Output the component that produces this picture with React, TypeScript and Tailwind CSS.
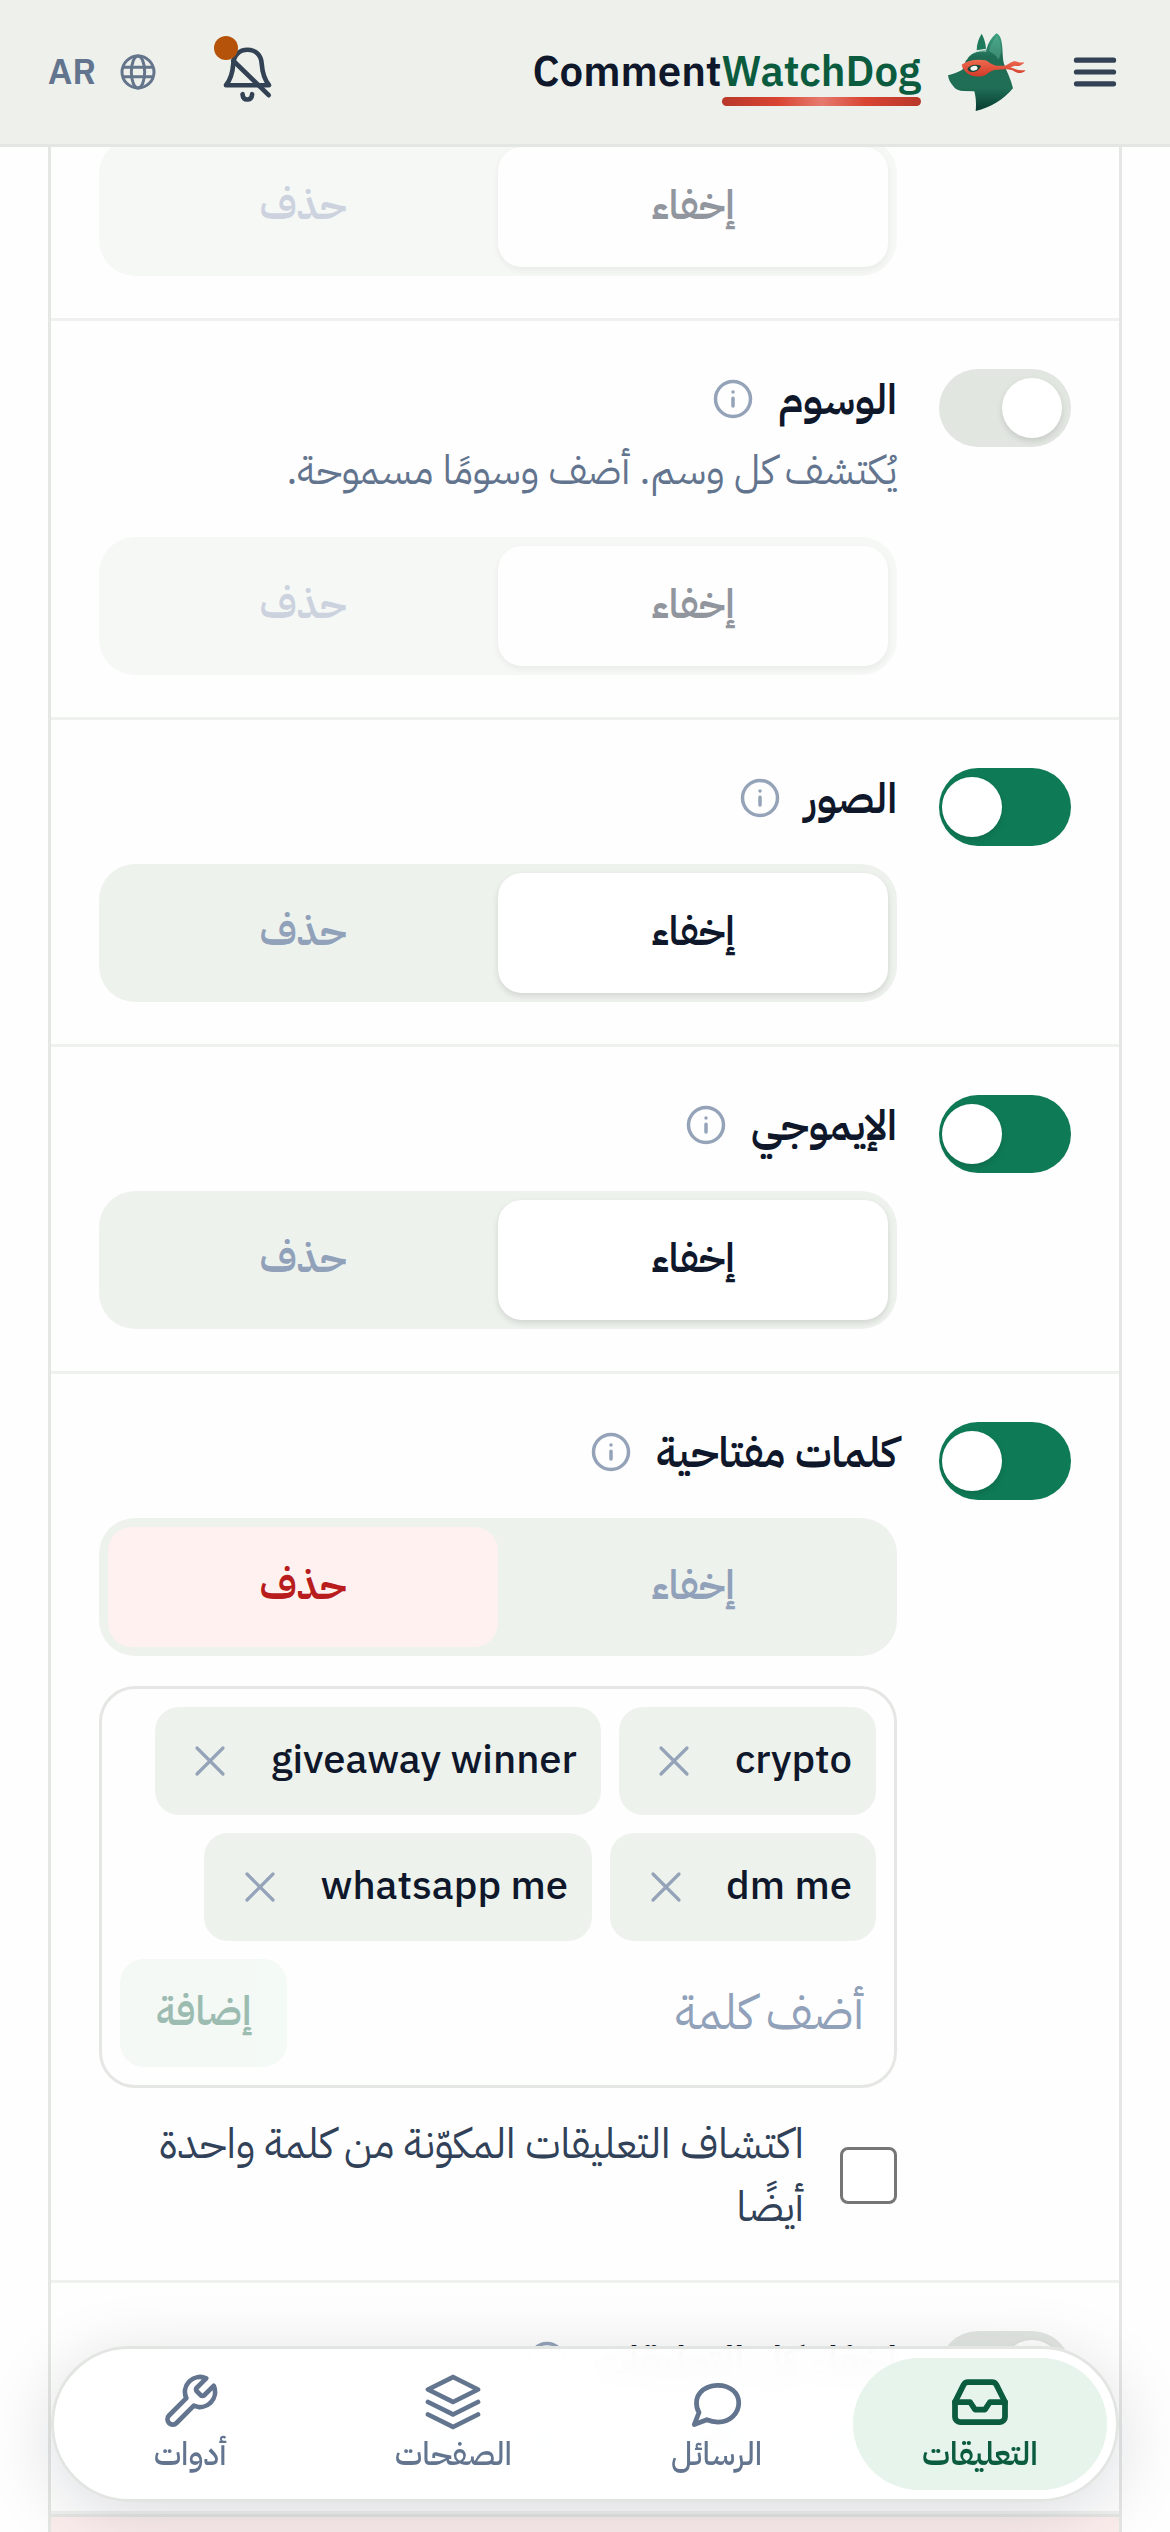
import { useState } from 'react';
import type { ReactNode } from 'react';
import clsx from 'clsx';

type Action = 'hide' | 'delete';

function DogLogo() {
  return (
    <svg viewBox="135 68 234 234" className="size-[78px]" aria-hidden="true">
      <defs>
        <linearGradient id="dogHead" x1="0" y1="0" x2="0" y2="1">
          <stop offset="0" stopColor="#3fa483" />
          <stop offset="0.3" stopColor="#1f6b54" />
          <stop offset="0.7" stopColor="#1f6f56" />
          <stop offset="1" stopColor="#083b30" />
        </linearGradient>
        <linearGradient id="dogMask" x1="0" y1="0" x2="0" y2="1">
          <stop offset="0" stopColor="#ee6a4f" />
          <stop offset="1" stopColor="#d13a28" />
        </linearGradient>
      </defs>
      <path d="M236 70C227 84 221 101 221 120L249 115C248 98 243 82 236 70z" fill="#1f7a5c" />
      <path
        d="M280 69C265 82 255 98 250 118C224 119 199 130 188 152L178 178C165 186 150 191 135 195C136 208 143 219 151 228C158 238 168 242 183 242L214 243C219 262 220 281 218 302C263 292 302 268 330 234C324 206 311 184 303 160C297 140 301 108 293 84C290 76 286 71 280 69z"
        fill="url(#dogHead)"
      />
      <path d="M282 76C270 90 262 104 258 122C270 128 280 136 286 148C298 130 297 96 282 76z" fill="#5fb598" opacity="0.45" />
      <path d="M190 149C200 128 222 119 250 122" fill="none" stroke="#d8ebe1" strokeWidth="3" />
      <path
        d="M176 163C194 150 222 145 248 150C258 156 268 164 280 166L306 166C320 160 326 152 338 153C346 156 354 158 364 156C358 166 346 168 336 166L322 171C334 174 344 180 354 180L368 180C360 190 346 190 336 184C326 178 316 177 304 177L274 179C262 182 256 188 248 194C228 202 206 200 192 188C184 180 178 174 176 163z"
        fill="url(#dogMask)"
      />
      <path d="M193 176C200 164 216 160 234 166C230 180 212 190 197 182z" fill="#12493a" />
      <ellipse cx="213" cy="174" rx="11" ry="7" fill="#f3f6f2" transform="rotate(-12 213 174)" />
    </svg>
  );
}

function BellOffIcon() {
  return (
    <svg viewBox="540 66 166 180" className="h-[60px] w-[55px]" fill="none" stroke="#334155" strokeWidth="14" strokeLinecap="round" strokeLinejoin="round" aria-hidden="true">
      <path d="M558 196C572 178 578 160 580 132C581 104 599 89 623 89C648 89 665 106 666 132C668 160 674 178 688 196z" />
      <path d="M608 223C609 234 615 239 622 239C630 239 636 234 637 223" />
      <path d="M580 122L687 226" />
    </svg>
  );
}

function GlobeIcon() {
  return (
    <svg viewBox="240 101 108 108" className="size-9" fill="none" stroke="#64748b" strokeWidth="9" aria-hidden="true">
      <circle cx="294" cy="155" r="48" />
      <ellipse cx="294" cy="155" rx="20" ry="48" />
      <path d="M249 141H339M249 169H339" />
    </svg>
  );
}

function MenuIcon() {
  return (
    <svg viewBox="0 0 24 24" className="size-[54px]" fill="none" stroke="#334155" strokeWidth="2.3" strokeLinecap="round" aria-hidden="true">
      <path d="M3.75 6.75h16.5M3.75 12h16.5M3.75 17.25h16.5" />
    </svg>
  );
}

function InfoIcon() {
  return (
    <svg viewBox="0 0 24 24" className="size-[42px]" fill="none" stroke="#94a3b8" strokeWidth="2" strokeLinecap="round" aria-hidden="true">
      <circle cx="12" cy="12" r="10" />
      <path d="M12 11.5v4.5M12 8h.01" />
    </svg>
  );
}

function CloseIcon() {
  return (
    <svg viewBox="0 0 24 24" className="size-12" fill="none" stroke="#94a3b8" strokeWidth="1.6" strokeLinecap="round" aria-hidden="true">
      <path d="M5.5 5.5l13 13M18.5 5.5l-13 13" />
    </svg>
  );
}

function NavIcon({ children, active }: { children: ReactNode; active?: boolean }) {
  return (
    <svg viewBox="0 0 24 24" className="size-[60px]" fill="none" stroke="currentColor" strokeWidth={active ? 2.3 : 1.9} strokeLinecap="round" strokeLinejoin="round" aria-hidden="true">
      {children}
    </svg>
  );
}

const navItems = [
  {
    label: 'التعليقات',
    icon: (
      <>
        <path d="M22 12h-6l-2 3h-4l-2-3H2" />
        <path d="M5.45 5.11L2 12v6a2 2 0 0 0 2 2h16a2 2 0 0 0 2-2v-6l-3.45-6.89A2 2 0 0 0 16.76 4H7.24a2 2 0 0 0-1.79 1.11z" />
      </>
    ),
  },
  {
    label: 'الرسائل',
    icon: <path d="M20.7 12.4C20.7 16.6 17.1 20 12.4 20c-1.6 0-3.1-.3-4.5-.9L2.9 21l1.9-4.8C4.1 15.1 3.8 13.8 3.8 12.4 3.8 8.2 7.6 5.3 12.4 5.3S20.7 8.3 20.7 12.4z" />,
  },
  {
    label: 'الصفحات',
    icon: <path d="M12 2L2 7l10 5 10-5-10-5zM2 17l10 5 10-5M2 12l10 5 10-5" />,
  },
  {
    label: 'أدوات',
    icon: <path d="M14.7 6.3a1 1 0 0 0 0 1.4l1.6 1.6a1 1 0 0 0 1.4 0l3.77-3.77a6 6 0 0 1-7.94 7.94l-6.91 6.91a2.12 2.12 0 0 1-3-3l6.91-6.91a6 6 0 0 1 7.94-7.94l-3.76 3.76z" />,
  },
];

function Toggle({ on, label, onClick }: { on: boolean; label: string; onClick: () => void }) {
  return (
    <button
      type="button"
      role="switch"
      aria-checked={on}
      aria-label={label}
      onClick={onClick}
      className={clsx(
        'mt-1.5 flex h-[78px] w-[132px] shrink-0 items-center rounded-full',
        on ? 'justify-end bg-[#0f7a56] pl-[3px]' : 'justify-start bg-[#e2e6e1] pr-[9px]',
      )}
    >
      <span className="size-[60px] rounded-full bg-white shadow-[0_3px_6px_rgba(0,0,0,0.12)]" />
    </button>
  );
}

function Segment({ value, disabled, onChange }: { value: Action; disabled?: boolean; onChange: (value: Action) => void }) {
  const base = 'h-[120px] flex-1 rounded-3xl pb-0.5 text-[40px] font-semibold';

  return (
    <div className={clsx('flex rounded-[36px] bg-[#eef2ed] p-[9px]', disabled && 'opacity-45')}>
      <button
        type="button"
        disabled={disabled}
        aria-pressed={value === 'hide'}
        onClick={() => onChange('hide')}
        className={clsx(base, value === 'hide' ? 'bg-white text-slate-900 shadow-[0_3px_6px_rgba(0,0,0,0.12)]' : 'text-slate-400')}
      >
        إخفاء
      </button>
      <button
        type="button"
        disabled={disabled}
        aria-pressed={value === 'delete'}
        onClick={() => onChange('delete')}
        className={clsx(base, value === 'delete' ? 'bg-[#fef1f0] text-[#b91c1c]' : 'text-slate-400')}
      >
        حذف
      </button>
    </div>
  );
}

interface RuleProps {
  title: string;
  description?: string;
  enabled?: boolean;
  action?: Action;
  segment?: boolean;
  children?: ReactNode;
}

function Rule({ title, description, enabled = false, action = 'hide', segment = true, children }: RuleProps) {
  const [on, setOn] = useState(enabled);
  const [value, setValue] = useState<Action>(action);

  return (
    <section className="flex items-start gap-[42px] border-b-[3px] border-[#eff1ee] px-12 py-[42px]">
      <Toggle on={on} label={title} onClick={() => setOn(!on)} />
      <div className="flex min-w-0 flex-1 flex-col gap-[30px]">
        <div>
          <div className="flex h-[72px] items-center gap-6">
            <h3 className="text-[42px] font-semibold text-slate-900">{title}</h3>
            <button type="button" aria-label={`معلومات: ${title}`}>
              <InfoIcon />
            </button>
          </div>
          {description && <p className="text-[40px] leading-[72px] text-slate-500">{description}</p>}
        </div>
        {segment && <Segment value={value} disabled={!on} onChange={setValue} />}
        {children}
      </div>
    </section>
  );
}

function Keywords() {
  const [words, setWords] = useState(['crypto', 'giveaway winner', 'dm me', 'whatsapp me']);
  const [draft, setDraft] = useState('');

  const add = () => {
    if (!draft.trim()) return;
    setWords([...words, draft.trim()]);
    setDraft('');
  };

  return (
    <>
      <div className="flex flex-wrap gap-[18px] rounded-[36px] border-[3px] border-[#e5e7e4] p-[18px]">
        {words.map((word) => (
          <span key={word} className="flex h-[108px] items-center gap-2 rounded-3xl bg-[#eef2ed] pr-6 pl-[3px] text-[40px] font-medium text-slate-900">
            <span className="pb-0.5">{word}</span>
            <button
              type="button"
              aria-label={`إزالة ${word}`}
              onClick={() => setWords(words.filter((w) => w !== word))}
              className="flex size-[105px] items-center justify-center"
            >
              <CloseIcon />
            </button>
          </span>
        ))}
        <div className="flex w-full gap-3">
          <input
            type="text"
            aria-label="أضف كلمة"
            placeholder="أضف كلمة"
            value={draft}
            onChange={(e) => setDraft(e.target.value)}
            className="h-[108px] min-w-0 flex-1 bg-transparent px-3 text-[48px] text-slate-900 outline-none placeholder:text-slate-400"
          />
          <button
            type="button"
            disabled={!draft.trim()}
            onClick={add}
            className="h-[108px] shrink-0 rounded-3xl bg-[#e6f4ec] px-9 pb-0.5 text-[40px] font-semibold text-[#0b5c3f] disabled:opacity-40"
          >
            إضافة
          </button>
        </div>
      </div>
      <label className="-mt-1.5 flex items-center gap-9 text-[42px] leading-[63px] text-slate-700">
        <input type="checkbox" className="size-[57px] shrink-0 appearance-none rounded-lg border-[3px] border-[#767676] bg-white checked:bg-[#0f7a56]" />
        <span>اكتشاف التعليقات المكوّنة من كلمة واحدة أيضًا</span>
      </label>
    </>
  );
}

function Header() {
  return (
    <header className="fixed inset-x-0 top-0 z-20 flex h-[147px] items-center justify-between border-b-[3px] border-[#e3e6e3] bg-[#edf0eb] px-12">
      <div className="flex items-center gap-[42px]">
        <button type="button" aria-label="القائمة">
          <MenuIcon />
        </button>
        <a href="#" dir="ltr" className="flex items-center gap-[27px] text-[42px] leading-[60px] font-semibold">
          <span className="flex">
            <span className="text-slate-900">Comment</span>
            <span className="relative text-[#0b5c3f]">
              WatchDog
              <span className="absolute inset-x-0 -bottom-1 h-[9px] rounded-full bg-[linear-gradient(90deg,#b8382a,#d94432_28%,#e57a6e_50%,#d94432_72%,#b8382a)]" />
            </span>
          </span>
          <DogLogo />
        </a>
      </div>
      <div className="flex items-center gap-16">
        <button type="button" aria-label="الإشعارات" className="relative">
          <BellOffIcon />
          <span className="absolute -top-1.5 -left-1.5 size-6 rounded-full bg-[#b45309]" />
        </button>
        <button type="button" className="flex items-center gap-6 text-[36px] font-semibold text-slate-500">
          <GlobeIcon />
          AR
        </button>
      </div>
    </header>
  );
}

function BottomNav() {
  return (
    <nav className="fixed inset-x-[51px] bottom-[30px] z-20 flex gap-[9px] rounded-full border-[3px] border-[#e2e5e1] bg-white/97 p-[9px] shadow-[0_15px_72px_rgba(15,23,42,0.14)] backdrop-blur-lg">
      {navItems.map((item, i) => (
        <a
          key={item.label}
          href="#"
          aria-current={i === 0 ? 'page' : undefined}
          className={clsx(
            'flex h-[132px] flex-1 flex-col items-center justify-center rounded-full text-[32px] leading-[45px]',
            i === 0 ? 'bg-[#e6f4ec] font-semibold text-[#0b5c3f]' : 'font-medium text-slate-500',
          )}
        >
          <NavIcon active={i === 0}>{item.icon}</NavIcon>
          {item.label}
        </a>
      ))}
    </nav>
  );
}

export default function App() {
  const [mentionAction, setMentionAction] = useState<Action>('hide');

  return (
    <div dir="rtl" className="flex min-h-screen flex-col bg-[#fefefe] font-['IBM_Plex_Sans_Arabic','IBM_Plex_Sans','Noto_Sans_Arabic',sans-serif]">
      <Header />
      <main className="mx-12 flex flex-1 flex-col border-x-[3px] border-[#e5e7e4] pt-[138px]">
        <section className="border-b-[3px] border-[#eff1ee] pr-[222px] pb-[42px] pl-12">
          <Segment value={mentionAction} disabled onChange={setMentionAction} />
        </section>
        <Rule title="الوسوم" description="يُكتشف كل وسم. أضف وسومًا مسموحة." />
        <Rule title="الصور" enabled />
        <Rule title="الإيموجي" enabled />
        <Rule title="كلمات مفتاحية" enabled action="delete">
          <Keywords />
        </Rule>
        <Rule title="إخفاء كل التعليقات" description="إخفاء كل تعليق جديد حتى تراجعه." segment={false} />
        <div className="flex-1 border-t-[3px] border-[#e5e7e4] bg-[#fdeeee]" />
      </main>
      <BottomNav />
    </div>
  );
}
